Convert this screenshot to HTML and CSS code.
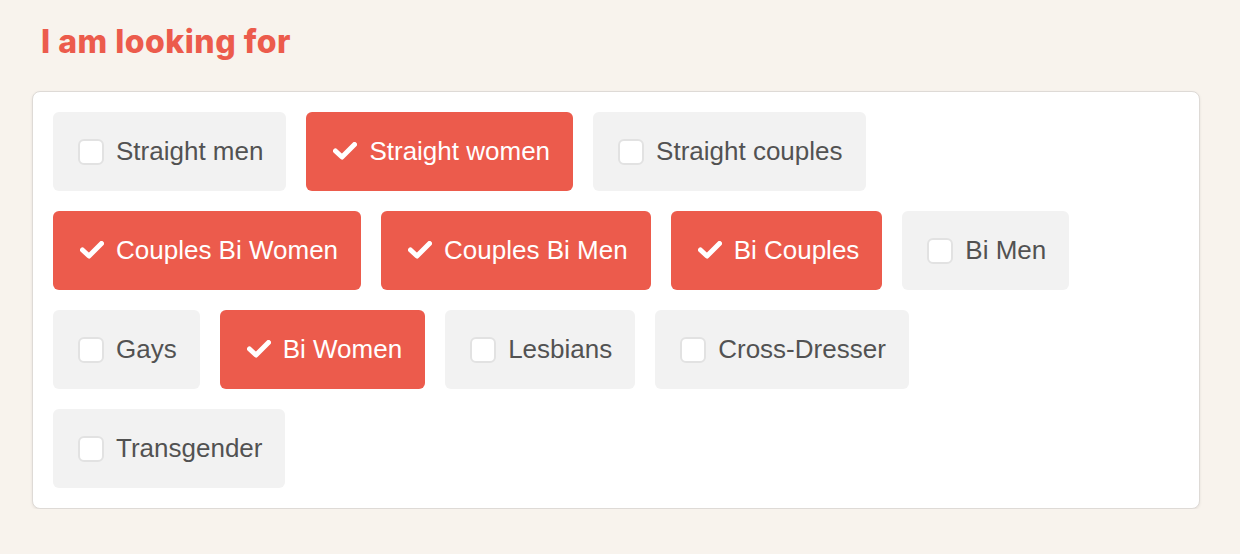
FILE: index.html
```html
<!DOCTYPE html>
<html lang="en">
<head>
<meta charset="utf-8">
<title>I am looking for</title>
<link rel="stylesheet" href="styles.css">
</head>
<body>
<div class="page">
  <h2 class="title">I am looking for</h2>
  <div class="card">
    <div class="options">
      <label class="option"><span class="box"></span><span class="label">Straight men</span></label>
      <label class="option checked"><span class="tick"><svg viewBox="0 0 26 26" width="26" height="26"><polyline points="4.5,12 11,18 23.5,5.5"/></svg></span><span class="label">Straight women</span></label>
      <label class="option"><span class="box"></span><span class="label">Straight couples</span></label>
      <label class="option checked"><span class="tick"><svg viewBox="0 0 26 26" width="26" height="26"><polyline points="4.5,12 11,18 23.5,5.5"/></svg></span><span class="label">Couples Bi Women</span></label>
      <label class="option checked"><span class="tick"><svg viewBox="0 0 26 26" width="26" height="26"><polyline points="4.5,12 11,18 23.5,5.5"/></svg></span><span class="label">Couples Bi Men</span></label>
      <label class="option checked"><span class="tick"><svg viewBox="0 0 26 26" width="26" height="26"><polyline points="4.5,12 11,18 23.5,5.5"/></svg></span><span class="label">Bi Couples</span></label>
      <label class="option"><span class="box"></span><span class="label">Bi Men</span></label>
      <label class="option"><span class="box"></span><span class="label">Gays</span></label>
      <label class="option checked"><span class="tick"><svg viewBox="0 0 26 26" width="26" height="26"><polyline points="4.5,12 11,18 23.5,5.5"/></svg></span><span class="label">Bi Women</span></label>
      <label class="option"><span class="box"></span><span class="label">Lesbians</span></label>
      <label class="option"><span class="box"></span><span class="label">Cross-Dresser</span></label>
      <label class="option"><span class="box"></span><span class="label">Transgender</span></label>
    </div>
  </div>
</div>
</body>
</html>
```

FILE: styles.css
```css
html, body {
  margin: 0;
  padding: 0;
  background: #f8f3ed;
}

.page {
  width: 1168px;
  margin-left: 32px;
  padding-top: 22px;
}

.title {
  margin: 0 0 29px 9px;
  font-family: "Inter", "Lato", "Liberation Sans", sans-serif;
  font-weight: 800;
  font-size: 32px;
  letter-spacing: 0.5px;
  line-height: 40px;
  color: #ec5b4c;
}

.card {
  background: #ffffff;
  border: 1px solid #dedad6;
  border-radius: 8px;
  box-shadow: 0 1px 3px rgba(0, 0, 0, 0.08);
  padding: 20px 66px 20px 20px;
}

.options {
  display: flex;
  flex-wrap: wrap;
  gap: 20px;
}

.option {
  display: flex;
  align-items: center;
  height: 79px;
  box-sizing: border-box;
  padding: 0 23px 2px 25px;
  border-radius: 6px;
  background: #f2f2f2;
  font-family: "Liberation Sans", Arial, sans-serif;
  font-size: 26px;
  color: #525252;
}

.option.checked {
  background: #ec5b4c;
  color: #ffffff;
}

.box {
  width: 26px;
  height: 26px;
  box-sizing: border-box;
  border: 2px solid #e2e2e2;
  border-radius: 6px;
  background: #ffffff;
  margin-right: 12px;
  margin-top: 2px;
  flex: none;
}

.tick {
  width: 26px;
  height: 26px;
  margin-right: 12px;
  margin-top: 2px;
  flex: none;
  display: flex;
}

.tick svg {
  display: block;
  filter: blur(0.7px);
}

.tick polyline {
  fill: none;
  stroke: #ffffff;
  stroke-width: 5;
  stroke-linecap: round;
  stroke-linejoin: round;
}

.label {
  line-height: 30px;
  white-space: nowrap;
}
```
